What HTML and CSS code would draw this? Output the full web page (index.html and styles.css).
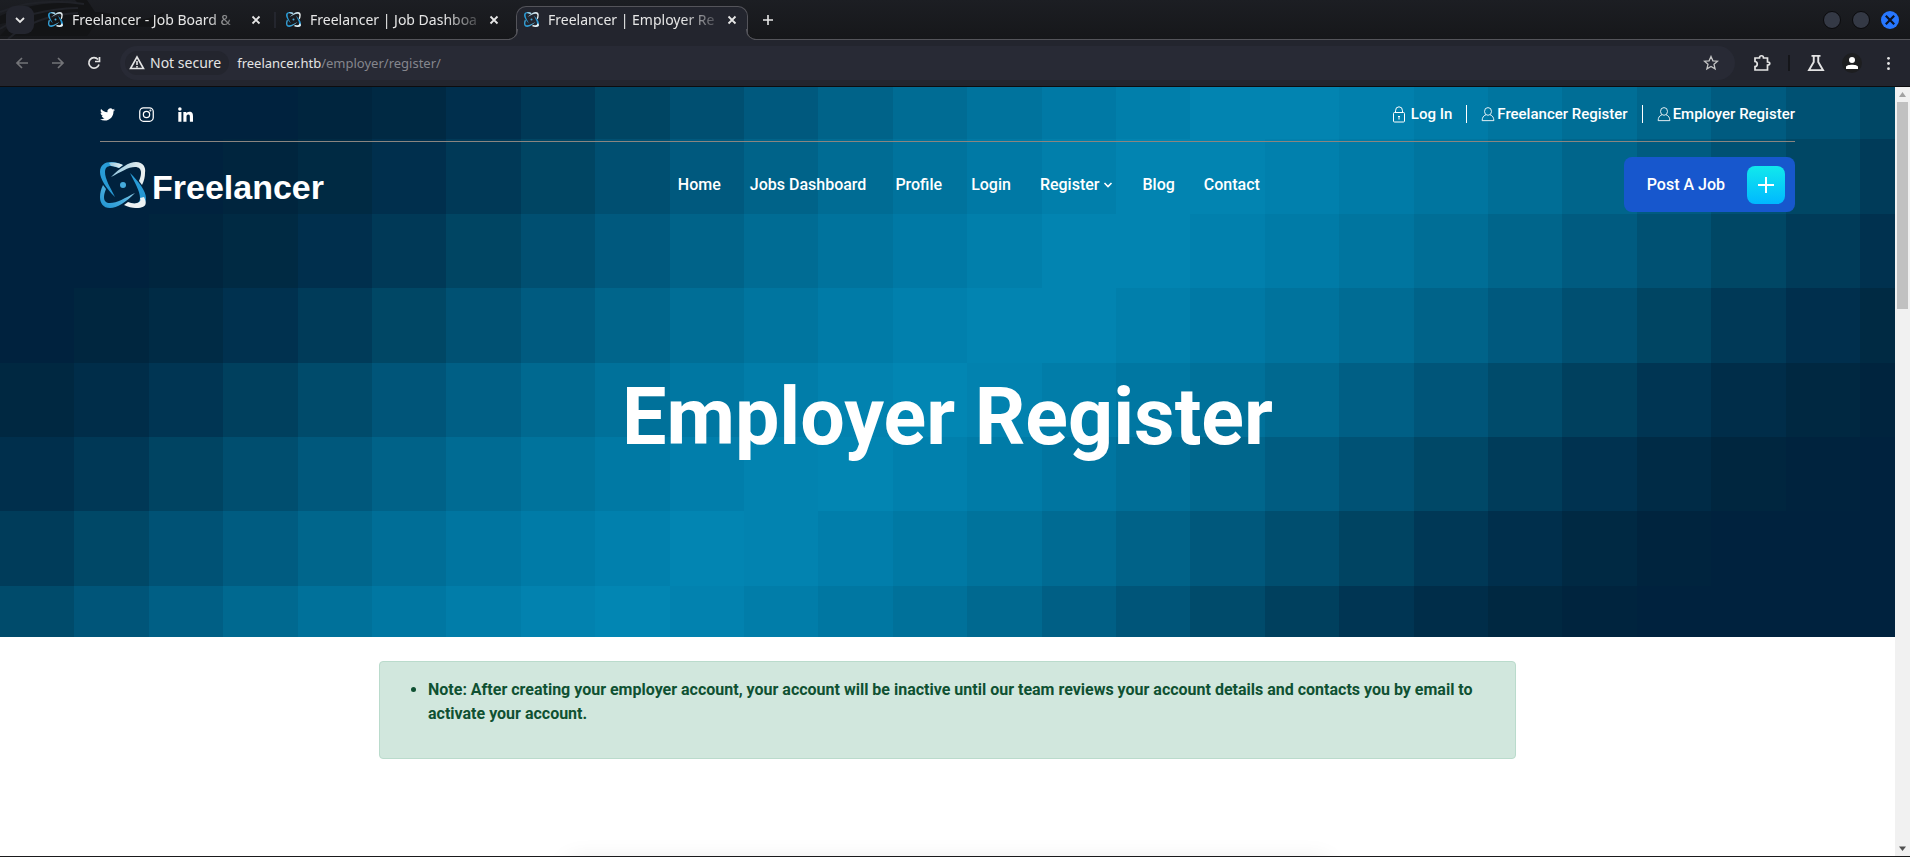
FILE: index.html
```html
<!DOCTYPE html>
<html lang="en">
<head>
<meta charset="utf-8">
<title>Freelancer | Employer Register</title>
<link rel="stylesheet" href="styles.css">
</head>
<body>
<svg class="defs" aria-hidden="true">
  <defs>
    <linearGradient id="blueUp" x1="0" y1="1" x2="1" y2="0"><stop offset="0" stop-color="#1c93d2"/><stop offset=".55" stop-color="#4fb0de"/><stop offset="1" stop-color="#c5dfe8"/></linearGradient>
    <linearGradient id="blueDown" x1="0" y1="0" x2="1" y2="1"><stop offset="0" stop-color="#2a9ed8"/><stop offset="1" stop-color="#2496d2"/></linearGradient>
    <linearGradient id="pale" x1="0" y1="0" x2="1" y2="0"><stop offset="0" stop-color="#8fc4dc"/><stop offset="1" stop-color="#f0f3f2"/></linearGradient>
    <symbol id="atom" viewBox="0 0 46 46">
      <path fill="url(#blueDown)" d="M15 35C6 26 0 17 0 10 0 3 5 0 11 0c4 0 8 1 12 3l-4 3c-3-1-5-2-8-2-4 0-6 2-6 6 0 7 5 15 10 25z"/>
      <path fill="url(#pale)" d="M9 1c5-1 10 0 14 2l-4 3c-3-1-5-2-8-2z"/>
      <path fill="url(#pale)" d="M11 15C20 6 29 0 36 0c7 0 10 5 9 11 0 4-1 8-3 12l-3-4c1-3 2-5 2-8 0-4-2-6-6-6-7 0-14 5-24 10z"/>
      <path fill="url(#blueDown)" d="M30 11c9 9 16 18 16 25 0 7-5 10-11 10l-5-5c6 2 10 0 10-5 0-7-5-15-10-25z"/>
      <path fill="#edf2f3" d="M24 43l4-3c3 1 6 2 9 1 3-1 4-2 3-5l4-1c4 8 1 11-8 11-4 0-8-1-12-3z"/>
      <path fill="url(#blueUp)" d="M35 31C26 40 17 46 10 46 3 46 0 41 0 35c0-4 1-8 3-12l3 4c-1 3-2 5-2 8 0 4 2 6 6 6 7 0 15-5 25-10z"/>
      <circle cx="23" cy="23" r="3" fill="#45abdc"/>
    </symbol>
    <symbol id="cross" viewBox="0 0 10 10"><path d="M1.5 1.5l7 7m0-7l-7 7" fill="none" stroke="currentColor" stroke-width="1.8"/></symbol>
    <symbol id="user" viewBox="0 0 16 17"><ellipse cx="8" cy="5" rx="4" ry="4.4"/><path d="M5.500 9C2.500 10 1.500 12 1.300 15.500h13.400C14.500 12 13.500 10 10.500 9"/></symbol>
  </defs>
</svg>
<div class="browser">
  <header class="tabstrip">
    <svg class="emblem" viewBox="0 0 200 39" aria-hidden="true"><path d="M0 16C25 5 50 2 78 3l-3-3h12l8 12c15 0 28 6 40 8 12 0 20-4 30-8l-6 7 9-2-7 7 7 0c-22 6-46 2-67-7l-14 19H0l14-15L0 24z"/><path class="emblem-line" d="M0 12Q35-3 84 4M0 29Q30 9 78 8M8 39Q36 15 78 13"/></svg>
    <button class="tab-search" aria-label="Search tabs"><svg viewBox="0 0 10 10"><path d="M1 3l4 4 4-4" fill="none" stroke="currentColor" stroke-width="1.800"/></svg></button>
    <nav class="tabs" aria-label="Tabs">
      <div class="tab"><svg class="favicon"><use href="#atom"/></svg><a href="#" class="tab-title">Freelancer - Job Board &amp;</a><button aria-label="Close tab"><svg><use href="#cross"/></svg></button></div>
      <div class="tab tab-divided"><svg class="favicon"><use href="#atom"/></svg><a href="#" class="tab-title">Freelancer | Job Dashboa</a><button aria-label="Close tab"><svg><use href="#cross"/></svg></button></div>
      <div class="tab tab-active"><svg class="favicon"><use href="#atom"/></svg><a href="#" class="tab-title">Freelancer | Employer Re</a><button aria-label="Close tab"><svg><use href="#cross"/></svg></button></div>
    </nav>
    <button class="new-tab" aria-label="New tab"><svg viewBox="0 0 12 12"><path d="M6 1v10M1 6h10" stroke="currentColor" stroke-width="1.600"/></svg></button>
    <div class="window-controls"><button aria-label="Minimize"></button><button aria-label="Maximize"></button><button class="window-close" aria-label="Close"><svg><use href="#cross"/></svg></button></div>
  </header>
  <div class="toolbar">
    <button class="tool dim" aria-label="Back"><svg viewBox="0 0 16 16"><path d="M14 8H3M8 3L3 8l5 5"/></svg></button>
    <button class="tool dim" aria-label="Forward"><svg viewBox="0 0 16 16"><path d="M2 8h11M8 3l5 5-5 5"/></svg></button>
    <button class="tool" aria-label="Reload"><svg viewBox="0 0 16 16"><path d="M13 9.500A5.200 5.200 0 1 1 12 4.500M13.500 2v4.500H9"/></svg></button>
    <div class="omnibox">
      <button class="security"><svg viewBox="0 0 16 16"><path d="M8 2L1.500 13.500h13zM8 6v4M8 11v1.500"/></svg>Not secure</button>
      <a class="url" href="#">freelancer.htb<span>/employer/register/</span></a>
      <button class="star" aria-label="Bookmark"><svg viewBox="0 0 16 16"><path d="M8 1.500l1.900 4.300 4.700.4-3.600 3.100 1.100 4.600L8 11.500l-4.100 2.400L5 9.300 1.400 6.200l4.700-.4z"/></svg></button>
    </div>
    <div class="extensions">
      <button class="tool" aria-label="Extensions"><svg viewBox="0 0 18 18"><path d="M2 4h4.500c0-3 4-3 4 0h4v4c3 0 3 3 0 3v5H2v-3.500c3 0 3-5 0-5z"/></svg></button>
      <span class="tool-divider"></span>
      <button class="tool" aria-label="Labs"><svg viewBox="0 0 16 16"><path d="M4 1.700h8M6 2v5L1.800 14.300h12.400L10 7V2"/></svg></button>
      <button class="tool profile" aria-label="Profile"><svg viewBox="0 0 20 20"><circle cx="10" cy="7" r="3"/><path d="M4 16v-2c0-3 12-3 12 0v2z"/></svg></button>
      <button class="tool menu" aria-label="Menu"><svg viewBox="0 0 16 16"><circle cx="8" cy="2.500" r="1.500"/><circle cx="8" cy="8" r="1.500"/><circle cx="8" cy="13.500" r="1.500"/></svg></button>
    </div>
  </div>
  <div class="viewport">
    <div class="page">
      <section class="hero">
        <svg class="mosaic" id="mosaic" viewBox="0 0 1895 550" preserveAspectRatio="xMidYMid slice" aria-hidden="true"></svg>
        <div class="topbar">
          <div class="social">
            <a href="#" aria-label="Twitter"><svg viewBox="0 0 24 24"><path d="M24 4.600c-.9.400-1.800.700-2.800.8 1-.6 1.800-1.600 2.200-2.700-1 .6-2 1-3.100 1.200A4.900 4.900 0 0 0 11.900 8.400C7.700 8.200 4.100 6.200 1.700 3.200c-1.300 2.200-.7 5.100 1.500 6.600-.8 0-1.600-.2-2.200-.6-.1 2.300 1.600 4.400 3.900 4.900-.7.200-1.500.2-2.200.1.600 2 2.400 3.400 4.600 3.400A9.900 9.900 0 0 1 0 19.500 13.900 13.900 0 0 0 7.500 21.700c9.100 0 14.300-7.700 14-14.600 1-.7 1.800-1.600 2.500-2.500z"/></svg></a>
            <a href="#" aria-label="Instagram"><svg viewBox="0 0 24 24" class="line-icon"><rect x="1.200" y="1.200" width="21.600" height="21.600" rx="6"/><circle cx="12" cy="12" r="5"/><circle cx="18.300" cy="5.700" r=".6"/></svg></a>
            <a href="#" aria-label="LinkedIn"><svg viewBox="0 0 24 24"><path d="M.5 8h5v15.500h-5zM3 .4a2.800 2.800 0 1 1 0 5.700 2.800 2.800 0 0 1 0-5.700M8.600 8h4.700v2.100c.7-1.300 2.300-2.600 4.800-2.600 5 0 5.900 3.300 5.900 7.600v8.400h-5V16c0-1.800 0-4.100-2.500-4.100s-2.900 1.900-2.900 4v7.600h-5z"/></svg></a>
          </div>
          <nav class="account" aria-label="Account">
            <a href="#" class="login"><svg viewBox="0 0 14 17"><rect x="1.500" y="6.500" width="11" height="9.500" rx="1"/><path d="M3.500 6.500V4.800a3.500 4 0 0 1 7 0v1.700M7 10v3.500M6 10.500h2"/></svg>Log In</a>
            <a href="#"><svg><use href="#user"/></svg>Freelancer Register</a>
            <a href="#"><svg><use href="#user"/></svg>Employer Register</a>
          </nav>
        </div>
        <div class="mainbar">
          <a class="brand" href="#"><svg><use href="#atom"/></svg><span>Freelancer</span></a>
          <nav class="links" aria-label="Main">
            <a href="#">Home</a><a href="#">Jobs Dashboard</a><a href="#">Profile</a><a href="#">Login</a><a href="#">Register<svg viewBox="0 0 10 10"><path d="M1.500 3L5 6.500 8.500 3"/></svg></a><a href="#">Blog</a><a href="#">Contact</a>
          </nav>
          <a class="post" href="#">Post A Job<span class="plus"><svg viewBox="0 0 16 16"><path d="M8 0v16M0 8h16"/></svg></span></a>
        </div>
        <h1>Employer Register</h1>
      </section>
      <div class="notice" role="alert"><ul><li>Note: After creating your employer account, your account will be inactive until our team reviews your account details and contacts you by email to activate your account.</li></ul></div>
      <section class="form-card"></section>
    </div>
    <div class="scrollbar" aria-hidden="true"><svg viewBox="0 0 15 15"><path d="M7.500 5l3.500 5H4z" fill="#a3a3a3"/></svg><div class="track"><div class="thumb"></div></div><svg viewBox="0 0 15 15"><path d="M7.500 10L4 5.500h7z" fill="#505050"/></svg></div>
  </div>
</div>
<script src="mosaic.js"></script>
</body>
</html>
```
FILE: styles.css
```css
* { box-sizing: border-box; }
body { margin: 0; font-family: Roboto, "Liberation Sans", sans-serif; font-size: 16px; line-height: 24px; background: #fff; }
button { border: 0; padding: 0; background: none; color: inherit; font: inherit; display: flex; align-items: center; justify-content: center; }
a { color: inherit; text-decoration: none; }
svg { display: block; flex: none; }
.defs { position: absolute; width: 0; height: 0; }
.browser { height: 100vh; display: flex; flex-direction: column; overflow: hidden; border-bottom: 1px solid #1a1a1c; }

/* Tab strip */
.tabstrip { position: relative; flex: none; height: 40px; display: flex; align-items: flex-end; padding-left: 6px; background: linear-gradient(#1c1e23, #16171a); color: #e6e6e6; font-family: "Noto Sans", sans-serif; font-size: 14px; border-bottom: 1px solid #54545a; }
.emblem { position: absolute; left: 0; top: 0; width: 200px; height: 39px; fill: #131416; }
.emblem-line { fill: none; stroke: #202228; stroke-width: 2; }
.tab-search { position: relative; width: 28px; height: 28px; margin-bottom: 5px; border-radius: 9px; background: #23252e; }
.tab-search svg { width: 10px; height: 10px; }
.tabs { position: relative; display: flex; gap: 6px; margin: 0 0 -1px 6px; }
.tab { position: relative; width: 232px; height: 34px; display: flex; align-items: center; padding: 0 10px 7px 8px; }
.tab-divided::before { content: ""; position: absolute; left: -4px; top: 6px; width: 2px; height: 16px; background: #24262e; }
.favicon { width: 15px; height: 15px; margin-right: 9px; }
.tab-title { flex: 1; white-space: nowrap; -webkit-mask-image: linear-gradient(90deg, #000 80%, rgba(0, 0, 0, .2)); mask-image: linear-gradient(90deg, #000 80%, rgba(0, 0, 0, .2)); }
.tab button { width: 12px; margin-left: 10px; }
.tab button svg { width: 10px; height: 10px; }
.tab-active { background: #23252e; border: 1px solid #54545a; border-bottom: 0; border-radius: 10px 10px 0 0; padding: 0 9px 8px 7px; }
.tab-active::before, .tab-active::after { content: ""; position: absolute; bottom: 0; width: 10px; height: 10px; border-bottom: 1px solid #54545a; }
.tab-active::before { left: -10px; border-right: 1px solid #54545a; border-bottom-right-radius: 10px; box-shadow: 3px 3px 0 #23252e; clip-path: inset(0 -1px 0 0); }
.tab-active::after { right: -10px; border-left: 1px solid #54545a; border-bottom-left-radius: 10px; box-shadow: -3px 3px 0 #23252e; clip-path: inset(0 0 0 -1px); }
.new-tab { width: 28px; height: 28px; margin: 0 0 5px 6px; }
.new-tab svg { width: 12px; height: 12px; }
.window-controls { display: flex; align-items: center; gap: 11px; margin: 0 11px 10px auto; }
.window-controls button { width: 18px; height: 18px; border-radius: 50%; background: #343945; border: 1px solid #0a0a0c; }
.window-controls .window-close { border: 0; background: #2777ff; color: #0b1220; }
.window-close svg { width: 12px; height: 12px; }

/* Toolbar */
.toolbar { flex: none; height: 47px; display: flex; align-items: center; background: #23252e; border-bottom: 1px solid #0c0c0e; color: #e4e4e4; font-family: "Noto Sans", sans-serif; font-size: 14px; padding: 0 12px; }
.tool { width: 20px; height: 24px; margin-right: 16px; }
.tool svg { width: 16px; height: 16px; fill: none; stroke: currentColor; stroke-width: 1.7; }
.dim { color: #737478; }
.omnibox { flex: 1; height: 34px; display: flex; align-items: center; padding: 0 16px 0 5px; border-radius: 17px; background: #282a35; }
.security { height: 24px; gap: 5px; padding: 0 8px 0 4px; border-radius: 12px; background: #23252e; }
.security svg { width: 16px; height: 16px; fill: none; stroke: currentColor; stroke-width: 1.6; }
.url { margin-left: 8px; font-size: 13px; }
.url span { color: #85868d; }
.star { margin-left: auto; color: #c5c5c5; }
.star svg { width: 16px; height: 16px; fill: none; stroke: currentColor; stroke-width: 1.3; }
.extensions { display: flex; align-items: center; padding-left: 17px; gap: 16px; }
.extensions .tool { margin: 0; }
.extensions svg { width: 18px; height: 18px; }
.tool-divider { width: 2px; height: 16px; background: #15161a; }
.extensions .profile svg { width: 20px; height: 20px; fill: #fff; stroke: none; background: #1d1e20; border-radius: 50%; }
.extensions .menu svg { width: 15px; height: 15px; fill: currentColor; stroke: none; }

/* Page area */
.viewport { flex: 1; min-height: 0; display: flex; }
.page { flex: 1; min-width: 0; overflow: hidden; }
.scrollbar { width: 15px; display: flex; flex-direction: column; background: #f1f1f1; }
.scrollbar svg { width: 15px; height: 15px; }
.track { flex: 1; padding: 0 2px; }
.thumb { height: 28%; background: #c1c1c1; }

/* Hero */
.hero { position: relative; padding: 0 100px 172px; background: #00223e; color: #fff; overflow: hidden; }
.mosaic { position: absolute; inset: 0; width: 100%; height: 100%; }
.topbar, .mainbar, .hero h1 { position: relative; }
.topbar { height: 55px; display: flex; align-items: center; justify-content: space-between; border-bottom: 1px solid #8a8580; font-size: 15px; font-weight: 500; }
.social { display: flex; gap: 24px; }
.social svg { width: 15px; height: 15px; fill: #fff; }
.social .line-icon { fill: none; stroke: #fff; stroke-width: 2; }
.account { display: flex; }
.account a { display: flex; align-items: center; gap: 2px; line-height: 18px; }
.account .login { gap: 5px; }
.account a + a { margin-left: 14px; padding-left: 14px; border-left: 1px solid #fff; }
.account svg { width: 14px; height: 17px; fill: none; stroke: #fff; stroke-width: 1; }
.mainbar { display: flex; align-items: center; justify-content: space-between; padding-top: 15px; }
.brand { display: flex; align-items: center; gap: 6px; font: bold 34px/42px "Liberation Sans", Arial, sans-serif; }
.brand svg { width: 46px; height: 46px; }
.brand span { padding-top: 4px; }
.links { display: flex; gap: 29px; margin-right: 10px; font-weight: 500; }
.links a { display: flex; align-items: center; gap: 4px; }
.links svg { width: 10px; height: 10px; fill: none; stroke: #fff; stroke-width: 1.6; }
.post { height: 55px; display: flex; align-items: center; gap: 22px; padding: 0 10px 0 23px; border-radius: 8px; background: #1757cd; font-weight: 500; }
.plus { width: 38px; height: 38px; display: flex; align-items: center; justify-content: center; border-radius: 8px; background: linear-gradient(#11e9ec, #00b8ff); }
.plus svg { width: 16px; height: 16px; stroke: #fff; stroke-width: 2; }
.hero h1 { margin: 157px 0 0; font-size: 79px; line-height: 96px; font-weight: 700; text-align: center; }

/* Notice */
.notice { width: 60%; margin: 24px auto 0; padding: 16px; border: 1px solid #badbcc; border-radius: 4px; background: #d1e7dd; color: #0f5132; font-weight: 700; }
.notice ul { margin: 0 0 16px; padding-left: 32px; }
.form-card { width: 40%; height: 400px; margin: 104px auto 0; background: #fff; box-shadow: 0 0 24px rgba(0, 0, 0, .12); }
```
FILE: mosaic.js
```js
// Diagonal band of light over a grid of square tiles.
const ramp = [
  [2, 136, 181], [2, 132, 177], [1, 127, 172], [0, 122, 166], [0, 116, 158], [0, 109, 149], [0, 100, 138],
  [0, 90, 127], [0, 80, 114], [0, 70, 100], [0, 58, 88], [0, 48, 78], [0, 42, 68], [0, 37, 62], [0, 34, 62]
];
const peaks = [16.6, 15.6, 14.6, 13.4, 12, 10.7, 9.3, 8];
const size = 74.4;
const firstRowTop = -22;

function shade(distance) {
  const d = Math.min(Math.abs(distance) + 0.5, ramp.length - 1);
  const i = Math.floor(d);
  const next = ramp[Math.min(i + 1, ramp.length - 1)];
  return 'rgb(' + ramp[i].map((v, k) => Math.round(v + (next[k] - v) * (d - i))).join(',') + ')';
}

const svg = document.getElementById('mosaic');
peaks.forEach((peak, row) => {
  for (let col = 0; col < 26; col++) {
    const tile = document.createElementNS('http://www.w3.org/2000/svg', 'rect');
    tile.setAttribute('x', Math.round(col * size));
    tile.setAttribute('y', Math.round(firstRowTop + row * size));
    tile.setAttribute('width', 76);
    tile.setAttribute('height', 76);
    tile.setAttribute('fill', shade(col - peak));
    svg.appendChild(tile);
  }
});
```
